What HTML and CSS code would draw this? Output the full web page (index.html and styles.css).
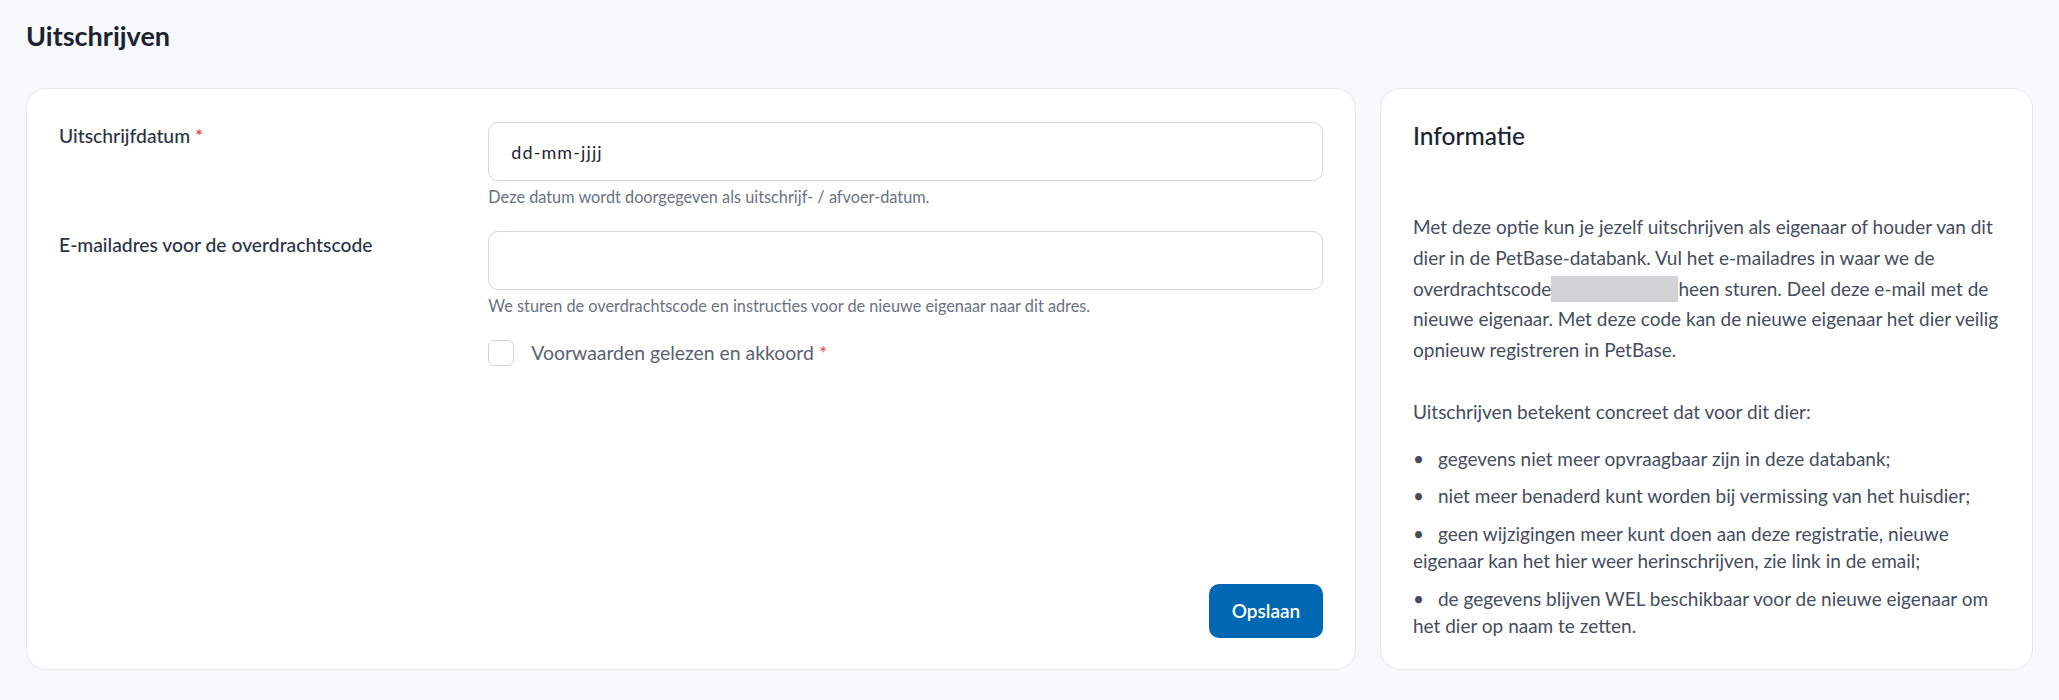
FILE: index.html
```html
<!DOCTYPE html>
<html lang="nl">
<head>
<meta charset="utf-8">
<title>Uitschrijven</title>
<link rel="stylesheet" href="styles.css">
</head>
<body>
<main class="page">
  <h1 class="page-title">Uitschrijven</h1>

  <div class="layout">
    <section class="card form-card">
      <form class="form">
        <div class="form-row">
          <label class="form-label" for="date">Uitschrijfdatum <span class="req">*</span></label>
          <div class="form-field">
            <input class="input input-date" id="date" type="text" placeholder="dd-mm-jjjj">
            <p class="help">Deze datum wordt doorgegeven als uitschrijf- / afvoer-datum.</p>
          </div>
        </div>

        <div class="form-row">
          <label class="form-label" for="email">E-mailadres voor de overdrachtscode</label>
          <div class="form-field">
            <input class="input" id="email" type="email">
            <p class="help">We sturen de overdrachtscode en instructies voor de nieuwe eigenaar naar dit adres.</p>
          </div>
        </div>

        <div class="form-row">
          <span></span>
          <label class="check">
            <input class="check-input" type="checkbox">
            <span class="check-text">Voorwaarden gelezen en akkoord <span class="req">*</span></span>
          </label>
        </div>

        <div class="form-actions">
          <button class="btn" type="button">Opslaan</button>
        </div>
      </form>
    </section>

    <aside class="card info-card">
      <h2 class="info-title">Informatie</h2>
      <p class="info-text">Met deze optie kun je jezelf uitschrijven als eigenaar of houder van dit dier in de PetBase-databank. Vul het e-mailadres in waar we de overdrachtscode<span class="redacted"></span>heen sturen. Deel deze e-mail met de nieuwe eigenaar. Met deze code kan de nieuwe eigenaar het dier veilig opnieuw registreren in PetBase.</p>
      <p class="info-text info-lead">Uitschrijven betekent concreet dat voor dit dier:</p>
      <ul class="info-list">
        <li>gegevens niet meer opvraagbaar zijn in deze databank;</li>
        <li>niet meer benaderd kunt worden bij vermissing van het huisdier;</li>
        <li>geen wijzigingen meer kunt doen aan deze registratie, nieuwe eigenaar kan het hier weer herinschrijven, zie link in de email;</li>
        <li>de gegevens blijven WEL beschikbaar voor de nieuwe eigenaar om het dier op naam te zetten.</li>
      </ul>
    </aside>
  </div>
</main>
</body>
</html>
```

FILE: styles.css
```css
* {
  box-sizing: border-box;
}

html,
body {
  margin: 0;
  background: #f8f9fb;
}

body {
  font-family: Lato, "Noto Sans", sans-serif;
  color: #2f3747;
}

.page {
  padding: 19px 26px 0;
}

.page-title {
  margin: 0 0 35px;
  font-size: 27px;
  line-height: 34px;
  font-weight: 700;
  color: #1b2230;
}

.layout {
  display: grid;
  grid-template-columns: calc((100% + 24px) * 2 / 3 - 24px) 1fr;
  gap: 24px;
  align-items: stretch;
}

.card {
  background: #ffffff;
  border: 1px solid #e6e8ed;
  border-radius: 20px;
}

/* ---------- form card ---------- */

.form-card {
  padding: 33px 32px 31px;
  display: flex;
  flex-direction: column;
}

.form {
  flex: 1;
  display: flex;
  flex-direction: column;
  gap: 22px;
}

.form-row {
  display: grid;
  grid-template-columns: calc((100% + 24px) / 3 - 24px) 1fr;
  column-gap: 24px;
}

.form-label {
  font-size: 19.3px;
  line-height: 27px;
  font-weight: 500;
  color: #2b3342;
}

.req {
  color: #e5484d;
}

.input {
  display: block;
  width: 100%;
  height: 59px;
  padding: 0 22px;
  border: 1px solid #d3d7df;
  border-radius: 10px;
  background: #ffffff;
  font-family: inherit;
  font-size: 18px;
  color: #1f2633;
  outline: none;
}

.input-date::placeholder {
  color: #1f2633;
  letter-spacing: 1.1px;
  opacity: 1;
}

.help {
  margin: 4px 0 0;
  font-size: 16.3px;
  line-height: 24px;
  color: #6b7280;
}

.check {
  display: flex;
  align-items: center;
  gap: 17px;
  cursor: pointer;
}

.check-input {
  appearance: none;
  margin: 0;
  width: 26px;
  height: 26px;
  border: 1.5px solid #cfd4dc;
  border-radius: 6px;
  background: #ffffff;
}

.check-text {
  font-size: 19.4px;
  line-height: 26px;
  color: #5a6271;
}

.form-actions {
  margin-top: auto;
  display: flex;
  justify-content: flex-end;
}

.btn {
  width: 114px;
  height: 54px;
  border: 0;
  border-radius: 10px;
  background: #0068b3;
  color: #ffffff;
  font-family: inherit;
  font-size: 19px;
  font-weight: 600;
  cursor: pointer;
}

/* ---------- info card ---------- */

.info-card {
  padding: 32px 32px 29px;
}

.info-title {
  margin: 0 0 62px;
  font-size: 24.5px;
  line-height: 29px;
  font-weight: 500;
  color: #1b2230;
}

.info-text {
  margin: 0 0 31px;
  font-size: 19px;
  line-height: 30.8px;
  color: #454d5c;
}

.info-lead {
  margin-bottom: 17px;
}

.redacted {
  display: inline-block;
  width: 127px;
  height: 26px;
  vertical-align: -6px;
  background: #d1d2d4;
}

.info-list {
  margin: 0;
  padding: 0;
  list-style: none;
  font-size: 19px;
  line-height: 27.5px;
  color: #454d5c;
}

.info-list li {
  margin-bottom: 10px;
}

.info-list li:last-child {
  margin-bottom: 0;
}

.info-list li::before {
  content: "\2022";
  display: inline-block;
  width: 25px;
}
```
